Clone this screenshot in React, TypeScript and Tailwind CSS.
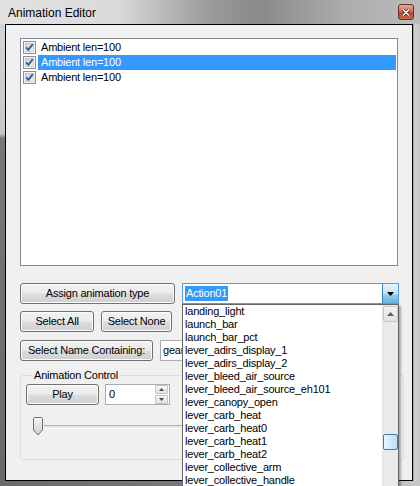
import React from "react"

const font = "font-['Liberation_Sans',Arial,sans-serif]"

const rows = ["Ambient len=100", "Ambient len=100", "Ambient len=100"]

const items = [
  "landing_light",
  "launch_bar",
  "launch_bar_pct",
  "lever_adirs_display_1",
  "lever_adirs_display_2",
  "lever_bleed_air_source",
  "lever_bleed_air_source_eh101",
  "lever_canopy_open",
  "lever_carb_heat",
  "lever_carb_heat0",
  "lever_carb_heat1",
  "lever_carb_heat2",
  "lever_collective_arm",
  "lever_collective_handle",
]

function Check() {
  return (
    <svg width="13" height="13" viewBox="0 0 13 13" className="shrink-0">
      <defs>
        <linearGradient id="cb" x1="0" y1="0" x2="1" y2="1">
          <stop offset="0" stopColor="#cbcfd5" />
          <stop offset="1" stopColor="#f6f6f6" />
        </linearGradient>
      </defs>
      <rect x="0.5" y="0.5" width="12" height="12" fill="#f4f4f4" stroke="#8e8f8f" />
      <rect x="2.5" y="2.5" width="8" height="8" fill="url(#cb)" stroke="#b4b9c2" strokeWidth="0.6" />
      <path d="M3.2 6.4 L5.4 8.8 L9.8 3.2" fill="none" stroke="#3c5a9a" strokeWidth="1.9" />
    </svg>
  )
}

function Btn({ children, w }: { children: React.ReactNode; w: string }) {
  return (
    <div
      className={`${w} h-[21px] shrink-0 rounded-[3px] border border-[#707070] bg-[linear-gradient(180deg,#f2f2f2_0%,#ebebeb_48%,#dddddd_52%,#cfcfcf_100%)] shadow-[inset_0_0_0_1px_#fcfcfc] flex items-center justify-center text-[11px] tracking-[-0.2px] text-black`}
    >
      {children}
    </div>
  )
}

export default function App() {
  return (
    <div className={`${font} w-[420px] h-[486px] overflow-hidden flex flex-col bg-[#c4c4c4] select-none`}>
      {/* Title bar */}
      <div className="h-[24px] shrink-0 flex items-center justify-between pl-[8px] pr-[6px] bg-[linear-gradient(90deg,#e2e2e2_0%,#dadada_28%,#9a9a9a_50%,#8a8a8a_62%,#acacac_82%,#bcbcbc_100%)]">
        <span className="text-[12px] text-black leading-none mt-[1px]">Animation Editor</span>
        <div className="w-[16px] h-[16px] rounded-[3px] border border-[#6b2a22] bg-[linear-gradient(180deg,#e8a898_0%,#d07060_45%,#b84830_55%,#c86a50_100%)] flex items-center justify-center">
          <svg width="8" height="7" viewBox="0 0 8 7">
            <path d="M1 0.5 L7 6.5 M7 0.5 L1 6.5" stroke="#3a1a14" strokeWidth="2.6" />
            <path d="M1 0.5 L7 6.5 M7 0.5 L1 6.5" stroke="#ffffff" strokeWidth="1.5" />
          </svg>
        </div>
      </div>

      <div className="flex flex-1 min-h-0">
        {/* Left frame */}
        <div className="w-[5px] shrink-0 bg-[linear-gradient(180deg,#d4d4d4_0%,#c6c6c6_24%,#777777_25%,#6a6a6a_100%)]" />

        {/* Client */}
        <div className="flex-1 border border-black bg-[#f0f0f0] flex flex-col pl-[14px] pt-[13px]">
          {/* Checked list */}
          <div className="w-[378px] h-[228px] shrink-0 border border-[#828790] bg-white pt-[1px] pl-[2px] pr-[1px]">
            {rows.map((r, i) => (
              <div key={i} className="h-[15px] flex items-center">
                <Check />
                <span
                  className={`ml-[2px] h-[15px] flex-1 flex items-center pl-[3px] text-[11px] tracking-[-0.2px] ${
                    i === 1 ? "bg-[#3399ff] text-white" : "text-black"
                  }`}
                >
                  {r}
                </span>
              </div>
            ))}
          </div>

          {/* Assign row */}
          <div className="mt-[17px] flex items-start">
            <Btn w="w-[155px]">Assign animation type</Btn>
            <div className="relative ml-[7px]">
              <div className="w-[217px] h-[21px] border border-[#569de5] bg-white flex items-center pl-[2px]">
                <span className="bg-[#3399ff] text-white text-[11px] tracking-[-0.2px] leading-[15px] px-[1px]">Action01</span>
                <div className="ml-auto h-[19px] w-[16px] border-l border-[#3c7fb1] bg-[linear-gradient(180deg,#e5f4fc_0%,#c4e5f6_50%,#98d1ef_51%,#68b3db_100%)] flex items-center justify-center">
                  <svg width="7" height="4" viewBox="0 0 7 4">
                    <path d="M0 0 H7 L3.5 4 Z" fill="#000" />
                  </svg>
                </div>
              </div>

              {/* Drop-down list */}
              <div className="absolute left-0 top-[21px] w-[217px] h-[190px] border border-[#646464] bg-white shadow-[2px_2px_2px_rgba(0,0,0,0.3)] flex z-10">
                <div className="flex-1 pl-[2px]">
                  {items.map((it) => (
                    <div key={it} className="h-[13px] leading-[13px] text-[11px] tracking-[-0.2px] text-black whitespace-nowrap">
                      {it}
                    </div>
                  ))}
                </div>
                <div className="w-[16px] bg-[#eaeaea] border-l border-[#e3e3e3] flex flex-col items-center pt-[1px]">
                  <div className="w-[15px] h-[16px] rounded-[2px] border border-[#c7c7c7] bg-[linear-gradient(180deg,#f3f3f3,#e2e2e2)] flex items-center justify-center">
                    <svg width="7" height="4" viewBox="0 0 7 4">
                      <path d="M0 4 H7 L3.5 0 Z" fill="#606060" />
                    </svg>
                  </div>
                  <div className="mt-[112px] w-[15px] h-[16px] rounded-[2px] border border-[#3c7fb1] bg-[linear-gradient(90deg,#e8f5fc,#b9e0f6)]" />
                </div>
              </div>
            </div>
          </div>

          {/* Select all / none */}
          <div className="mt-[7px] flex">
            <Btn w="w-[74px]">Select All</Btn>
            <div className="ml-[7px]">
              <Btn w="w-[71px]">Select None</Btn>
            </div>
          </div>

          {/* Select name containing */}
          <div className="mt-[8px] flex">
            <Btn w="w-[133px]">Select Name Containing:</Btn>
            <div className="ml-[7px] w-[110px] h-[21px] border border-[#abadb3] bg-white flex items-center pl-[2px] text-[11px] tracking-[-0.2px] text-black">
              gear
            </div>
          </div>

          {/* Animation control */}
          <fieldset className="mt-[7px] w-[384px] h-[92px] border border-[#d5dfe5] rounded-[3px] pl-[5px] pr-[5px]">
            <legend className="ml-[6px] px-[2px] text-[11px] tracking-[-0.2px] text-black leading-[14px]">
              Animation Control
            </legend>
            <div className="mt-[2px] flex items-center">
              <Btn w="w-[73px]">Play</Btn>
              <div className="ml-[6px] w-[65px] h-[21px] border border-[#abadb3] bg-white flex items-center pl-[3px] text-[11px] text-black">
                0
                <div className="ml-auto mr-[1px] w-[13px] h-[19px] flex flex-col gap-[1px]">
                  <div className="flex-1 border border-[#c4c4c4] rounded-[1px] bg-[linear-gradient(180deg,#f6f6f6,#e0e0e0)] flex items-center justify-center">
                    <svg width="5" height="3" viewBox="0 0 5 3">
                      <path d="M0 3 H5 L2.5 0 Z" fill="#4a4a4a" />
                    </svg>
                  </div>
                  <div className="flex-1 border border-[#c4c4c4] rounded-[1px] bg-[linear-gradient(180deg,#f6f6f6,#e0e0e0)] flex items-center justify-center">
                    <svg width="5" height="3" viewBox="0 0 5 3">
                      <path d="M0 0 H5 L2.5 3 Z" fill="#4a4a4a" />
                    </svg>
                  </div>
                </div>
              </div>
            </div>
            <div className="mt-[12px] flex items-center pl-[6px]">
              <svg width="12" height="19" viewBox="0 0 12 19" className="shrink-0">
                <defs>
                  <linearGradient id="th" x1="0" y1="0" x2="0" y2="1">
                    <stop offset="0" stopColor="#f6f6f6" />
                    <stop offset="1" stopColor="#cfcfcf" />
                  </linearGradient>
                </defs>
                <path d="M1.5 1.5 Q1.5 0.5 2.5 0.5 H9.5 Q10.5 0.5 10.5 1.5 V13 L6 18 L1.5 13 Z" fill="url(#th)" stroke="#707070" />
              </svg>
              <div className="flex-1 mr-[4px] h-[4px] border-t border-[#b0b0b0] border-b border-b-[#ffffff] bg-[#e6e6e6]" />
            </div>
          </fieldset>
        </div>

        {/* Right frame */}
        <div className="w-[7px] shrink-0 bg-[linear-gradient(90deg,#8a8a8a_0%,#d0d0d0_20%,#c8c8c8_100%)]" />
      </div>

      {/* Bottom frame */}
      <div className="h-[5px] shrink-0 bg-[linear-gradient(90deg,#6a6a6a_0%,#7a7a7a_50%,#c8c8c8_100%)]" />
    </div>
  )
}
